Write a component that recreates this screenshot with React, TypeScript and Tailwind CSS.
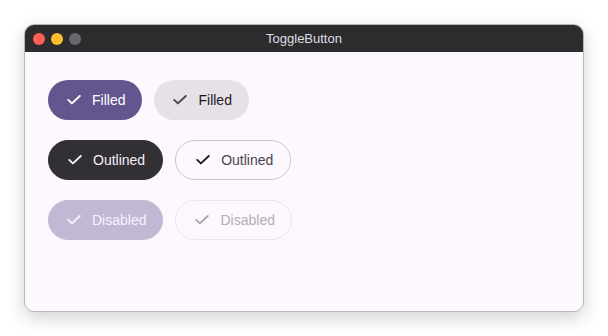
import React from 'react';

function Check({ className }: { className?: string }) {
  return (
    <svg width="14" height="10" viewBox="0 0 14 10" className={className} fill="none">
      <path d="M1.2 4.9 L4.9 8.4 L12.8 1" stroke="currentColor" strokeWidth="1.9" strokeLinecap="round" strokeLinejoin="round" />
    </svg>
  );
}

type Props = { label: string; className: string; iconClass?: string };

function Toggle({ label, className, iconClass }: Props) {
  return (
    <button
      className={`h-10 rounded-full flex items-center text-[14px] leading-none ${className}`}
    >
      <Check className={`mr-[11px] ${iconClass ?? ''}`} />
      <span>{label}</span>
    </button>
  );
}

export default function App() {
  return (
    <div className="w-[608px] h-[336px] bg-white p-6 pb-0" style={{ fontFamily: '"Liberation Sans", Arial, sans-serif' }}>
      <div className="w-[560px] h-[288px] rounded-[10px] overflow-hidden flex flex-col bg-[#fdf7fe] border border-[#b9b6bc] shadow-[0_6px_18px_rgba(0,0,0,0.18)]">
        <div className="h-[27px] bg-[#2c2b2e] flex items-center relative shrink-0">
          <div className="flex items-center gap-[6px] pl-[8px]">
            <span className="w-3 h-3 rounded-full bg-[#fe5f57]" />
            <span className="w-3 h-3 rounded-full bg-[#febc2e]" />
            <span className="w-3 h-3 rounded-full bg-[#68676b]" />
          </div>
          <div className="absolute inset-0 flex items-center justify-center text-[13px] text-[#dedde0]">
            ToggleButton
          </div>
        </div>
        <div className="flex flex-col gap-5 pt-[28px] pl-[23px]">
          <div className="flex gap-3">
            <Toggle label="Filled" className="bg-[#65558f] text-white pl-[19px] pr-[17px]" />
            <Toggle label="Filled" className="bg-[#e6e0e9] text-[#1d1b20] pl-[19px] pr-[17px]" iconClass="text-[#49454f]" />
          </div>
          <div className="flex gap-3">
            <Toggle label="Outlined" className="bg-[#322f35] border border-[#322f35] text-[#f5eff7] pl-[19px] pr-[17px]" />
            <Toggle label="Outlined" className="border border-[#cac4d0] text-[#49454f] pl-[20px] pr-[17px]" iconClass="text-[#1d1b20]" />
          </div>
          <div className="flex gap-3">
            <Toggle label="Disabled" className="bg-[#c2b8d4] border border-[#c2b8d4] text-[#f6f2fa] pl-[18px] pr-[16px]" />
            <Toggle label="Disabled" className="border border-[#ebe5ee] text-[#b3aeb8] pl-[19px] pr-[16px]" iconClass="text-[#aca7b1]" />
          </div>
        </div>
      </div>
    </div>
  );
}
